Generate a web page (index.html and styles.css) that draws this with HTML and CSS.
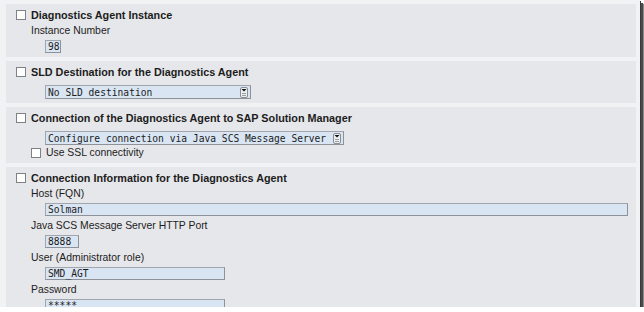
FILE: index.html
```html
<!DOCTYPE html>
<html lang="en">
<head>
    <meta charset="UTF-8">
    <title>Diagnostics Agent Parameters</title>
    <link rel="stylesheet" href="styles.css">
</head>
<body>
    <div class="frame">
        <div class="section">
            <div class="section-head">
                <span class="check"></span>
                Diagnostics Agent Instance
            </div>
            <div class="field">
                <div class="label">Instance Number</div>
                <div class="input input-tiny">98</div>
            </div>
        </div>

        <div class="section">
            <div class="section-head">
                <span class="check"></span>
                SLD Destination for the Diagnostics Agent
            </div>
            <div class="field">
                <div class="select select-short">
                    No SLD destination
                    <svg class="select-arrow" viewBox="0 0 8 11">
                        <rect x="0.5" y="0.5" width="7" height="10" rx="1.5" fill="#eceef0" stroke="#8a8d92"/>
                        <path d="M1.5 2h5L4 4.5z" fill="#111"/>
                        <path d="M2 6.5h4M2 8.5h4" stroke="#9a9da2"/>
                    </svg>
                </div>
            </div>
        </div>

        <div class="section">
            <div class="section-head">
                <span class="check"></span>
                Connection of the Diagnostics Agent to SAP Solution Manager
            </div>
            <div class="field">
                <div class="select select-long">
                    Configure connection via Java SCS Message Server
                    <svg class="select-arrow" viewBox="0 0 8 11">
                        <rect x="0.5" y="0.5" width="7" height="10" rx="1.5" fill="#eceef0" stroke="#8a8d92"/>
                        <path d="M1.5 2h5L4 4.5z" fill="#111"/>
                        <path d="M2 6.5h4M2 8.5h4" stroke="#9a9da2"/>
                    </svg>
                </div>
            </div>
            <div class="option">
                <span class="check"></span>
                Use SSL connectivity
            </div>
        </div>

        <div class="section section-last">
            <div class="section-head">
                <span class="check"></span>
                Connection Information for the Diagnostics Agent
            </div>
            <div class="field">
                <div class="label">Host (FQN)</div>
                <div class="input input-full">Solman</div>
            </div>
            <div class="field">
                <div class="label">Java SCS Message Server HTTP Port</div>
                <div class="input input-port">8888</div>
            </div>
            <div class="field">
                <div class="label">User (Administrator role)</div>
                <div class="input input-mid">SMD_AGT</div>
            </div>
            <div class="field">
                <div class="label">Password</div>
                <div class="input input-mid">*****</div>
            </div>
        </div>
    </div>
</body>
</html>
```

FILE: styles.css
```css
* {
    margin: 0;
    padding: 0;
    box-sizing: border-box;
}

body {
    background: #ffffff;
    font-family: "Liberation Sans", Arial, sans-serif;
    color: #1c1c1c;
    overflow: hidden;
}

.frame {
    width: 640px;
    height: 307px;
    background: #f1f2f4;
    padding: 4px 4px 0 6px;
    display: flex;
    flex-direction: column;
    gap: 4px;
    overflow: hidden;
    box-shadow: 1px 1px 0 #3a3a3a, 3px 3px 0 #4a4a4a, 4px 4px 1px #8a8a8a;
}

.section {
    background: #e6e7ea;
    padding: 3px 0 4px 10px;
}

.section-last {
    flex: 1;
    overflow: hidden;
}

.section-head {
    display: flex;
    align-items: center;
    gap: 5px;
    height: 16px;
    font-size: 10.8px;
    font-weight: bold;
    white-space: nowrap;
}

.check {
    width: 10px;
    height: 10px;
    background: #ffffff;
    border: 1px solid #7f8185;
    flex-shrink: 0;
}

.field {
    padding-left: 15px;
}

.label {
    margin-top: 1px;
    height: 14px;
    line-height: 14px;
    font-size: 10.4px;
    white-space: nowrap;
}

.field + .field .label {
    margin-top: 0;
}

.input,
.select {
    margin: 2px 0 3px 14px;
    height: 13px;
    padding-left: 2px;
    background: #d9e5f3;
    border: 1px solid #a2a6ac;
    border-right-color: #8e9298;
    border-bottom-color: #8e9298;
    font-family: "DejaVu Sans Mono", "Liberation Mono", monospace;
    font-size: 9.65px;
    line-height: 11px;
    color: #1c1c1c;
    white-space: nowrap;
}

.field:last-child .input {
    margin-bottom: 0;
}

.select {
    margin-top: 5px;
    margin-bottom: 0;
    height: 14px;
    display: flex;
    align-items: center;
    justify-content: space-between;
    padding-right: 2px;
}

.select-arrow {
    width: 8px;
    height: 11px;
}

.input-tiny { width: 16px; }
.input-port { width: 34px; }
.input-mid { width: 180px; }
.input-full { width: 583px; }
.select-short { width: 206px; }
.select-long { width: 299px; }

.option {
    display: flex;
    align-items: center;
    gap: 5px;
    padding-left: 15px;
    height: 13px;
    margin-top: 1px;
    font-size: 10.4px;
}
```
